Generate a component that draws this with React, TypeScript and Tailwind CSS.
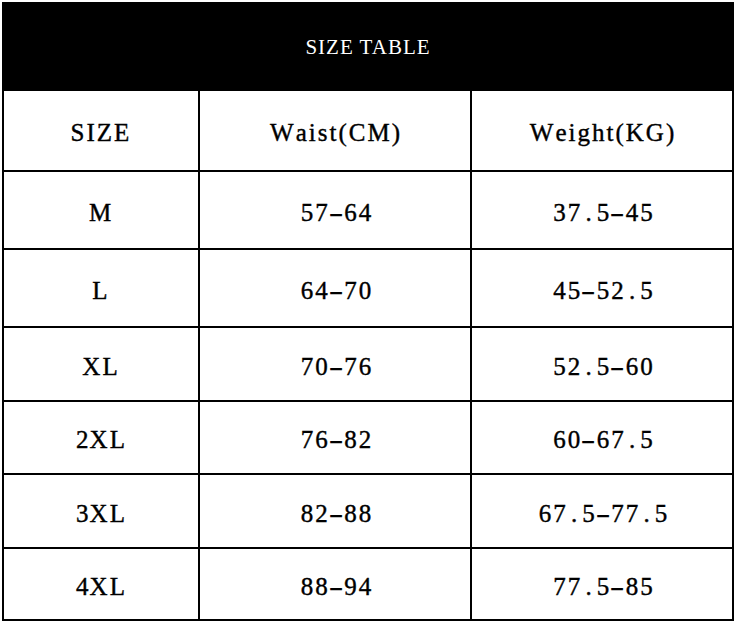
const rows: { size: string; waist: string; weight: string; h: string }[] = [
  { size: 'M', waist: '57-64', weight: '37.5-45', h: 'h-[78px]' },
  { size: 'L', waist: '64-70', weight: '45-52.5', h: 'h-[78px]' },
  { size: 'XL', waist: '70-76', weight: '52.5-60', h: 'h-[74px]' },
  { size: '2XL', waist: '76-82', weight: '60-67.5', h: 'h-[73px]' },
  { size: '3XL', waist: '82-88', weight: '67.5-77.5', h: 'h-[74px]' },
  { size: '4XL', waist: '88-94', weight: '77.5-85', h: 'h-[72px]' },
];

// digits and punctuation sit in fixed cells, like the half-width font of the original
function Mono({ text }: { text: string }) {
  return (
    <span className="inline-flex items-baseline">
      {text.split('').map((ch, i) =>
        /[0-9.\-]/.test(ch) ? (
          <span key={i} className="inline-block w-[14.5px] text-center">
            {ch === '-' ? <span className="inline-block scale-x-[1.7]">-</span> : ch}
          </span>
        ) : (
          <span key={i} className="tracking-[2px]">
            {ch}
          </span>
        )
      )}
    </span>
  );
}

function Row({ cells, h }: { cells: string[]; h: string }) {
  return (
    <div className={`grid grid-cols-[198px_272px_262px] ${h}`}>
      {cells.map((c, i) => (
        <div
          key={i}
          className={`flex items-center justify-center border-b-2 border-r-2 border-black pt-[4px] ${
            i === 0 ? 'border-l-2' : 'pl-[2px]'
          }`}
        >
          <Mono text={c} />
        </div>
      ))}
    </div>
  );
}

export default function App() {
  return (
    <div className="w-[736px] h-[624px] bg-white pl-[2px] pt-[2px]">
      <div
        className="w-[732px] text-black text-[25px] leading-none [-webkit-text-stroke:0.4px_black]"
        style={{ fontFamily: '"Liberation Serif", serif' }}
      >
        <div className="h-[89px] bg-black text-white text-[21px] tracking-[1px] flex items-center justify-center pt-[2px] [-webkit-text-stroke:0px]">
          SIZE TABLE
        </div>
        <Row cells={['SIZE', 'Waist(CM)', 'Weight(KG)']} h="h-[81px]" />
        {rows.map((r) => (
          <Row key={r.size} cells={[r.size, r.waist, r.weight]} h={r.h} />
        ))}
      </div>
    </div>
  );
}
